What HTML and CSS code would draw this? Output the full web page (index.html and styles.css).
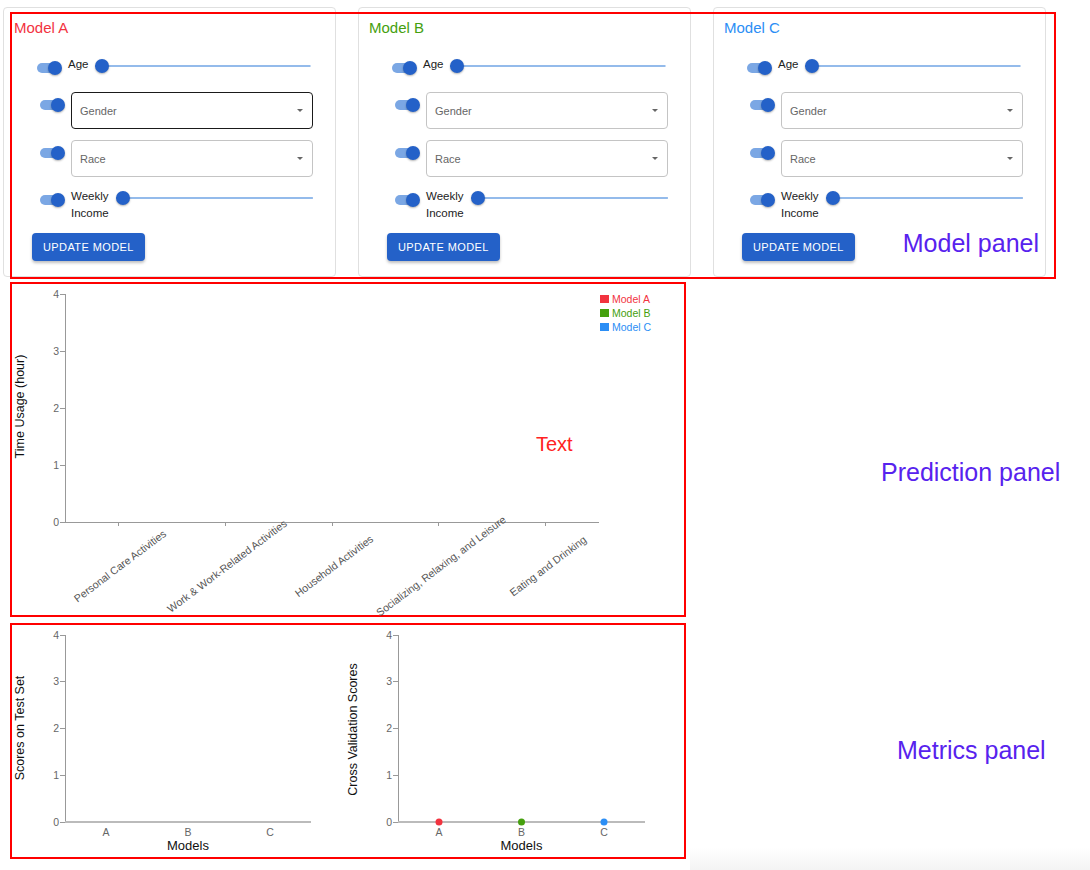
FILE: index.html
```html
<!DOCTYPE html>
<html lang="en">
<head>
<meta charset="utf-8">
<title>Model comparison</title>
<link rel="stylesheet" href="styles.css">
</head>
<body>
<div class="page">
  <div class="models">
    <div class="card">
      <div class="card-title title-a">Model A</div>
      <div class="controls">
        <div class="row row-age">
          <span class="switch"></span>
          <span class="ctrl-label">Age</span>
          <span class="slider"><span class="thumb"></span></span>
        </div>
        <div class="row row-select">
          <span class="switch"></span>
          <div class="select focused"><span>Gender</span><span class="arrow"></span></div>
        </div>
        <div class="row row-select row-race">
          <span class="switch"></span>
          <div class="select"><span>Race</span><span class="arrow"></span></div>
        </div>
        <div class="row row-income">
          <span class="switch"></span>
          <span class="ctrl-label two-line">Weekly<br>Income</span>
          <span class="slider"><span class="thumb"></span></span>
        </div>
      </div>
      <button class="update-btn">Update Model</button>
    </div>
    <div class="card">
      <div class="card-title title-b">Model B</div>
      <div class="controls">
        <div class="row row-age">
          <span class="switch"></span>
          <span class="ctrl-label">Age</span>
          <span class="slider"><span class="thumb"></span></span>
        </div>
        <div class="row row-select">
          <span class="switch"></span>
          <div class="select"><span>Gender</span><span class="arrow"></span></div>
        </div>
        <div class="row row-select row-race">
          <span class="switch"></span>
          <div class="select"><span>Race</span><span class="arrow"></span></div>
        </div>
        <div class="row row-income">
          <span class="switch"></span>
          <span class="ctrl-label two-line">Weekly<br>Income</span>
          <span class="slider"><span class="thumb"></span></span>
        </div>
      </div>
      <button class="update-btn">Update Model</button>
    </div>
    <div class="card">
      <div class="card-title title-c">Model C</div>
      <div class="controls">
        <div class="row row-age">
          <span class="switch"></span>
          <span class="ctrl-label">Age</span>
          <span class="slider"><span class="thumb"></span></span>
        </div>
        <div class="row row-select">
          <span class="switch"></span>
          <div class="select"><span>Gender</span><span class="arrow"></span></div>
        </div>
        <div class="row row-select row-race">
          <span class="switch"></span>
          <div class="select"><span>Race</span><span class="arrow"></span></div>
        </div>
        <div class="row row-income">
          <span class="switch"></span>
          <span class="ctrl-label two-line">Weekly<br>Income</span>
          <span class="slider"><span class="thumb"></span></span>
        </div>
      </div>
      <button class="update-btn">Update Model</button>
    </div>
    <div class="model-annot">
      <span class="annot-label">Model panel</span>
    </div>
  </div>

  <div class="panel-row prediction-row">
    <div class="panel prediction-panel">
      <svg class="chart" width="672" height="331" viewBox="0 0 672 331">
        <g class="axis">
          <line x1="53" y1="10" x2="53" y2="238"/>
          <line x1="48" y1="10" x2="53" y2="10"/>
          <line x1="48" y1="67" x2="53" y2="67"/>
          <line x1="48" y1="124" x2="53" y2="124"/>
          <line x1="48" y1="181" x2="53" y2="181"/>
          <line x1="48" y1="238" x2="53" y2="238"/>
          <line x1="53" y1="238" x2="587" y2="238"/>
          <line x1="106.4" y1="238" x2="106.4" y2="242"/>
          <line x1="213.2" y1="238" x2="213.2" y2="242"/>
          <line x1="320" y1="238" x2="320" y2="242"/>
          <line x1="426.8" y1="238" x2="426.8" y2="242"/>
          <line x1="533.6" y1="238" x2="533.6" y2="242"/>
        </g>
        <g class="tick-text" text-anchor="end">
          <text x="47" y="13.5">4</text>
          <text x="47" y="70.5">3</text>
          <text x="47" y="127.5">2</text>
          <text x="47" y="184.5">1</text>
          <text x="47" y="241.5">0</text>
        </g>
        <g class="cat-text" text-anchor="middle">
          <text transform="translate(108,282) rotate(-37)" dy="0.35em">Personal Care Activities</text>
          <text transform="translate(215,282) rotate(-37)" dy="0.35em">Work &amp; Work-Related Activities</text>
          <text transform="translate(322,282) rotate(-37)" dy="0.35em">Household Activities</text>
          <text transform="translate(429,282) rotate(-37)" dy="0.35em">Socializing, Relaxing, and Leisure</text>
          <text transform="translate(536,282) rotate(-37)" dy="0.35em">Eating and Drinking</text>
        </g>
        <text class="axis-title" text-anchor="middle" transform="translate(11.5,122.5) rotate(-90)">Time Usage (hour)</text>
        <g class="legend">
          <rect x="588" y="11" width="9" height="8" class="fill-a"/>
          <text x="600" y="18.7" class="fill-a">Model A</text>
          <rect x="588" y="25" width="9" height="8" class="fill-b"/>
          <text x="600" y="32.7" class="fill-b">Model B</text>
          <rect x="588" y="39" width="9" height="8" class="fill-c"/>
          <text x="600" y="46.7" class="fill-c">Model C</text>
        </g>
        <text class="annot-text" x="524" y="167">Text</text>
      </svg>
    </div>
    <span class="side-label prediction-label">Prediction panel</span>
  </div>

  <div class="panel-row metrics-row">
    <div class="panel metrics-panel">
      <svg class="chart" width="672" height="232" viewBox="0 0 672 232">
        <g class="axis">
          <line x1="53" y1="10" x2="53" y2="197"/>
          <line x1="48" y1="10" x2="53" y2="10"/>
          <line x1="48" y1="56.75" x2="53" y2="56.75"/>
          <line x1="48" y1="103.5" x2="53" y2="103.5"/>
          <line x1="48" y1="150.25" x2="53" y2="150.25"/>
          <line x1="48" y1="197" x2="53" y2="197"/>
        </g>
        <line class="xaxis" x1="53" y1="197" x2="299" y2="197"/>
        <g class="tick-text" text-anchor="end">
          <text x="47" y="13.5">4</text>
          <text x="47" y="60.25">3</text>
          <text x="47" y="107">2</text>
          <text x="47" y="153.75">1</text>
          <text x="47" y="200.5">0</text>
        </g>
        <g class="tick-text" text-anchor="middle">
          <text x="94" y="210.5">A</text>
          <text x="176" y="210.5">B</text>
          <text x="258" y="210.5">C</text>
        </g>
        <text class="axis-title models-title" x="176" y="225" text-anchor="middle">Models</text>
        <text class="axis-title" text-anchor="middle" transform="translate(12,103) rotate(-90)">Scores on Test Set</text>

        <g class="axis">
          <line x1="386" y1="10" x2="386" y2="197"/>
          <line x1="381" y1="10" x2="386" y2="10"/>
          <line x1="381" y1="56.75" x2="386" y2="56.75"/>
          <line x1="381" y1="103.5" x2="386" y2="103.5"/>
          <line x1="381" y1="150.25" x2="386" y2="150.25"/>
          <line x1="381" y1="197" x2="386" y2="197"/>
        </g>
        <line class="xaxis" x1="386" y1="197" x2="633" y2="197"/>
        <g class="tick-text" text-anchor="end">
          <text x="380" y="13.5">4</text>
          <text x="380" y="60.25">3</text>
          <text x="380" y="107">2</text>
          <text x="380" y="153.75">1</text>
          <text x="380" y="200.5">0</text>
        </g>
        <g class="tick-text" text-anchor="middle">
          <text x="427" y="210.5">A</text>
          <text x="509.5" y="210.5">B</text>
          <text x="592" y="210.5">C</text>
        </g>
        <circle cx="427" cy="197" r="3.5" class="fill-a"/>
        <circle cx="509.5" cy="197" r="3.5" class="fill-b"/>
        <circle cx="592" cy="197" r="3.5" class="fill-c"/>
        <text class="axis-title models-title" x="509.5" y="225" text-anchor="middle">Models</text>
        <text class="axis-title" text-anchor="middle" transform="translate(345,104.5) rotate(-90)">Cross Validation Scores</text>
      </svg>
    </div>
    <span class="side-label metrics-label">Metrics panel</span>
  </div>
</div>
</body>
</html>
```

FILE: styles.css
```css
html, body {
  height: 100%;
}
body {
  margin: 0;
  background-color: #fff;
  background-image: linear-gradient(to bottom, rgba(246,246,246,0), #f4f4f4);
  background-repeat: no-repeat;
  background-position: right bottom;
  background-size: 400px 22px;
  font-family: "Liberation Sans", Arial, Helvetica, sans-serif;
  color: #222;
  overflow: hidden;
}
.page {
  padding: 7px 0 0 3px;
  position: relative;
}
.models {
  display: flex;
  gap: 22.5px;
}
.card {
  width: 332.5px;
  height: 270px;
  box-sizing: border-box;
  border: 1px solid #e0e0e0;
  border-radius: 4px;
  padding: 11px 10px 0 10px;
  background: #fff;
}
.card-title {
  font-size: 15px;
  line-height: 18px;
  height: 18px;
}
.title-a { color: #f2333f; }
.title-b { color: #45a00e; }
.title-c { color: #2b8ef5; }

.controls {
  margin: 20px 12px 0 26px;
}
.row {
  display: flex;
  align-items: flex-start;
}
.switch {
  position: relative;
  flex: none;
  width: 25px;
  height: 14px;
}
.switch::before {
  content: "";
  position: absolute;
  left: 0;
  top: 2px;
  width: 23px;
  height: 10px;
  border-radius: 5px;
  background: #7ba7e4;
}
.switch::after {
  content: "";
  position: absolute;
  right: 0;
  top: 0;
  width: 14px;
  height: 14px;
  border-radius: 50%;
  background: #2461c8;
  box-shadow: 0 1px 2px rgba(0,0,0,0.3);
}
.ctrl-label {
  flex: none;
  font-size: 11.5px;
  line-height: 14px;
  color: #222;
  margin-left: 6px;
  margin-right: 7px;
}
.two-line {
  line-height: 16.5px;
}
.slider {
  flex: 1;
  height: 14px;
  display: flex;
  align-items: center;
  background: linear-gradient(#94bbeb, #94bbeb) no-repeat center / 100% 2px;
}
.thumb {
  width: 14px;
  height: 14px;
  border-radius: 50%;
  background: #2461c8;
  box-shadow: 0 1px 2px rgba(0,0,0,0.3);
}
.row-age {
  height: 18px;
  margin-left: -3px;
  margin-right: 2px;
}
.row-age .switch { margin-top: 4px; }
.row-age .slider { margin-top: 2px; }

.row-select {
  margin-top: 17px;
}
.row-race {
  margin-top: 11px;
}
.row-select .switch {
  margin-top: 6px;
}
.select {
  flex: 1;
  margin-left: 6px;
  height: 37px;
  box-sizing: border-box;
  border: 1px solid #c4c4c4;
  border-radius: 4px;
  display: flex;
  align-items: center;
  justify-content: space-between;
  padding: 0 9px 0 8px;
  font-size: 11px;
  color: #666;
}
.select.focused {
  border-color: #1a1a1a;
}
.arrow {
  width: 0;
  height: 0;
  border-left: 3.5px solid transparent;
  border-right: 3.5px solid transparent;
  border-top: 3.5px solid #666;
}
.row-income {
  margin-top: 11px;
}
.row-income .switch { margin-top: 5px; }
.row-income .slider { margin-top: 3px; }

.update-btn {
  display: block;
  margin: 12px 0 0 18px;
  height: 28px;
  padding: 0 11px;
  border: none;
  border-radius: 4px;
  background: #2461c8;
  color: #fff;
  font-family: "Liberation Sans", Arial, sans-serif;
  font-size: 11px;
  letter-spacing: 0.4px;
  text-transform: uppercase;
  box-shadow: 0 2px 3px rgba(0,0,0,0.25);
}

.model-annot {
  position: absolute;
  left: 10px;
  top: 12px;
  width: 1046px;
  height: 267px;
  box-sizing: border-box;
  border: 2px solid #f00;
  display: flex;
  justify-content: flex-end;
  align-items: flex-end;
  padding: 0 15px 20px 0;
  pointer-events: none;
}
.annot-label, .side-label {
  font-size: 25px;
  line-height: 28px;
  color: #5722ee;
  white-space: nowrap;
}

.panel-row {
  display: flex;
  align-items: flex-start;
  padding-left: 7px;
}
.prediction-row { margin-top: 5px; }
.metrics-row { margin-top: 6px; }
.panel {
  border: 2px solid #f00;
  flex: none;
  width: 672px;
}
.prediction-panel { height: 331px; }
.metrics-panel { height: 232px; }
.chart {
  display: block;
  overflow: visible;
  font-family: "Liberation Sans", Arial, sans-serif;
}
.prediction-label {
  margin-left: 195px;
  margin-top: 176px;
}
.metrics-label {
  margin-left: 211px;
  margin-top: 113px;
}

.axis line {
  stroke: #999;
  stroke-width: 1;
  shape-rendering: crispEdges;
}
.xaxis {
  stroke: #bbb;
  stroke-width: 2;
}
.tick-text text {
  font-size: 10.5px;
  fill: #666;
}
.cat-text text {
  font-size: 10.6px;
  fill: #555;
}
.axis-title {
  font-size: 12.5px;
  fill: #111;
}
.models-title {
  font-size: 13px;
}
.legend text {
  font-size: 10.5px;
}
.fill-a { fill: #f2333f; }
.fill-b { fill: #45a00e; }
.fill-c { fill: #2b8ef5; }
.annot-text {
  font-size: 20px;
  fill: #ff2222;
}
```
